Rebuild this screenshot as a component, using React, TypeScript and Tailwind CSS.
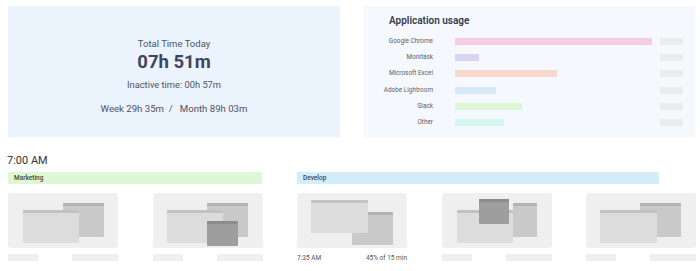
import React from "react";

const apps = [
  { name: "Google Chrome", w: 197, c: "bg-[#f5cde0]" },
  { name: "Monitask", w: 24, c: "bg-[#dbd3f3]" },
  { name: "Microsoft Excel", w: 102, c: "bg-[#f8d8cd]" },
  { name: "Adobe Lightroom", w: 41, c: "bg-[#d5e8f7]" },
  { name: "Slack", w: 67, c: "bg-[#ddf6d4]" },
  { name: "Other", w: 49, c: "bg-[#d3f6ef]" },
];

type Win = { x: number; y: number; w: number; h: number; tone: "front" | "back" | "dark" };

const cards: { wins: Win[]; caption?: [string, string] }[] = [
  {
    wins: [
      { x: 55, y: 10, w: 41, h: 34, tone: "back" },
      { x: 15, y: 17, w: 56, h: 33, tone: "front" },
    ],
  },
  {
    wins: [
      { x: 54, y: 10, w: 41, h: 34, tone: "back" },
      { x: 14, y: 17, w: 56, h: 33, tone: "front" },
      { x: 54, y: 28, w: 31, h: 25, tone: "dark" },
    ],
  },
  {
    wins: [
      { x: 55, y: 19, w: 41, h: 33, tone: "back" },
      { x: 14, y: 7, w: 57, h: 33, tone: "front" },
    ],
    caption: ["7:35 AM", "45% of 15 min"],
  },
  {
    wins: [
      { x: 71, y: 10, w: 24, h: 34, tone: "back" },
      { x: 15, y: 17, w: 56, h: 33, tone: "front" },
      { x: 37, y: 6, w: 30, h: 25, tone: "dark" },
    ],
  },
  {
    wins: [
      { x: 54, y: 10, w: 41, h: 34, tone: "back" },
      { x: 14, y: 17, w: 57, h: 33, tone: "front" },
    ],
  },
];

function Window({ w }: { w: Win }) {
  const body =
    w.tone === "front" ? "bg-[#dcdcdc]" : w.tone === "back" ? "bg-[#c9c9c9]" : "bg-[#9e9e9e]";
  const bar =
    w.tone === "front" ? "bg-[#c2c2c2]" : w.tone === "back" ? "bg-[#b2b2b2]" : "bg-[#8c8c8c]";
  return (
    <div
      className={`absolute ${body} rounded-[1px] overflow-hidden`}
      style={{ left: w.x, top: w.y, width: w.w, height: w.h }}
    >
      <div className={`h-[3px] ${bar}`} />
    </div>
  );
}

export default function App() {
  return (
    <div
      className="w-[700px] h-[271px] bg-white overflow-hidden text-[#3f4659]"
      style={{ fontFamily: "Roboto, 'Liberation Sans', sans-serif" }}
    >
      <div className="flex gap-[23px] pl-[8px] pt-[6px]">
        <div className="w-[332px] h-[131px] bg-[#ebf3fd] flex flex-col items-center pt-[32px]">
          <div className="text-[9.5px] leading-[11px] text-[#4b5367]">Total Time Today</div>
          <div className="text-[18.5px] leading-[22px] font-bold text-[#3c4664] mt-[2px]">07h 51m</div>
          <div className="text-[9.3px] leading-[11px] text-[#4b5367] mt-[6px]">Inactive time: 00h 57m</div>
          <div className="text-[9.6px] leading-[11px] text-[#4b5367] mt-[13px] whitespace-pre">
            Week 29h 35m  /   Month 89h 03m
          </div>
        </div>
        <div className="w-[332px] h-[131px] bg-[#f5f8fd] pt-[9px]">
          <div className="pl-[26px] text-[10px] leading-[12px] font-semibold text-[#353b50]">
            Application usage
          </div>
          <div className="flex flex-col gap-[9.2px] mt-[11px]">
            {apps.map((a) => (
              <div key={a.name} className="flex items-center h-[7px]">
                <div className="w-[70px] text-right text-[6.4px] leading-[7px] text-[#5a5f6b] whitespace-nowrap">
                  {a.name}
                </div>
                <div className="w-[200px] ml-[22px] h-[7px]">
                  <div className={`h-[7px] ${a.c}`} style={{ width: a.w }} />
                </div>
                <div className="ml-[5px] w-[23px] h-[7px] bg-[#ececec]" />
              </div>
            ))}
          </div>
        </div>
      </div>

      <div className="pl-[7px] mt-[17px] text-[11px] leading-[13px] text-[#333]">7:00 AM</div>

      <div className="flex pl-[8px] mt-[5px] gap-[35px]">
        <div className="w-[254px] h-[12px] bg-[#dcf8d5] text-[6.5px] leading-[12px] font-medium text-[#3c4a3a] pl-[6px]">
          Marketing
        </div>
        <div className="w-[362px] h-[12px] bg-[#d3eef9] text-[6.5px] leading-[12px] font-medium text-[#3a4550] pl-[6px]">
          Develop
        </div>
      </div>

      <div className="flex pl-[8px] mt-[9px] gap-[34.5px]">
        {cards.map((c, i) => (
          <div key={i} className="w-[110px] flex flex-col">
            <div className="relative w-[110px] h-[55px] bg-[#efefef] rounded-[3px]">
              {c.wins.map((w, j) => (
                <Window key={j} w={w} />
              ))}
            </div>
            {c.caption ? (
              <div className="flex justify-between mt-[6px] text-[6.5px] leading-[9px] text-[#555]">
                <span>{c.caption[0]}</span>
                <span>{c.caption[1]}</span>
              </div>
            ) : (
              <div className="flex justify-between mt-[6px]">
                <div className="w-[30px] h-[7px] bg-[#efefef]" />
                <div className="w-[46px] h-[7px] bg-[#efefef]" />
              </div>
            )}
          </div>
        ))}
      </div>
    </div>
  );
}
